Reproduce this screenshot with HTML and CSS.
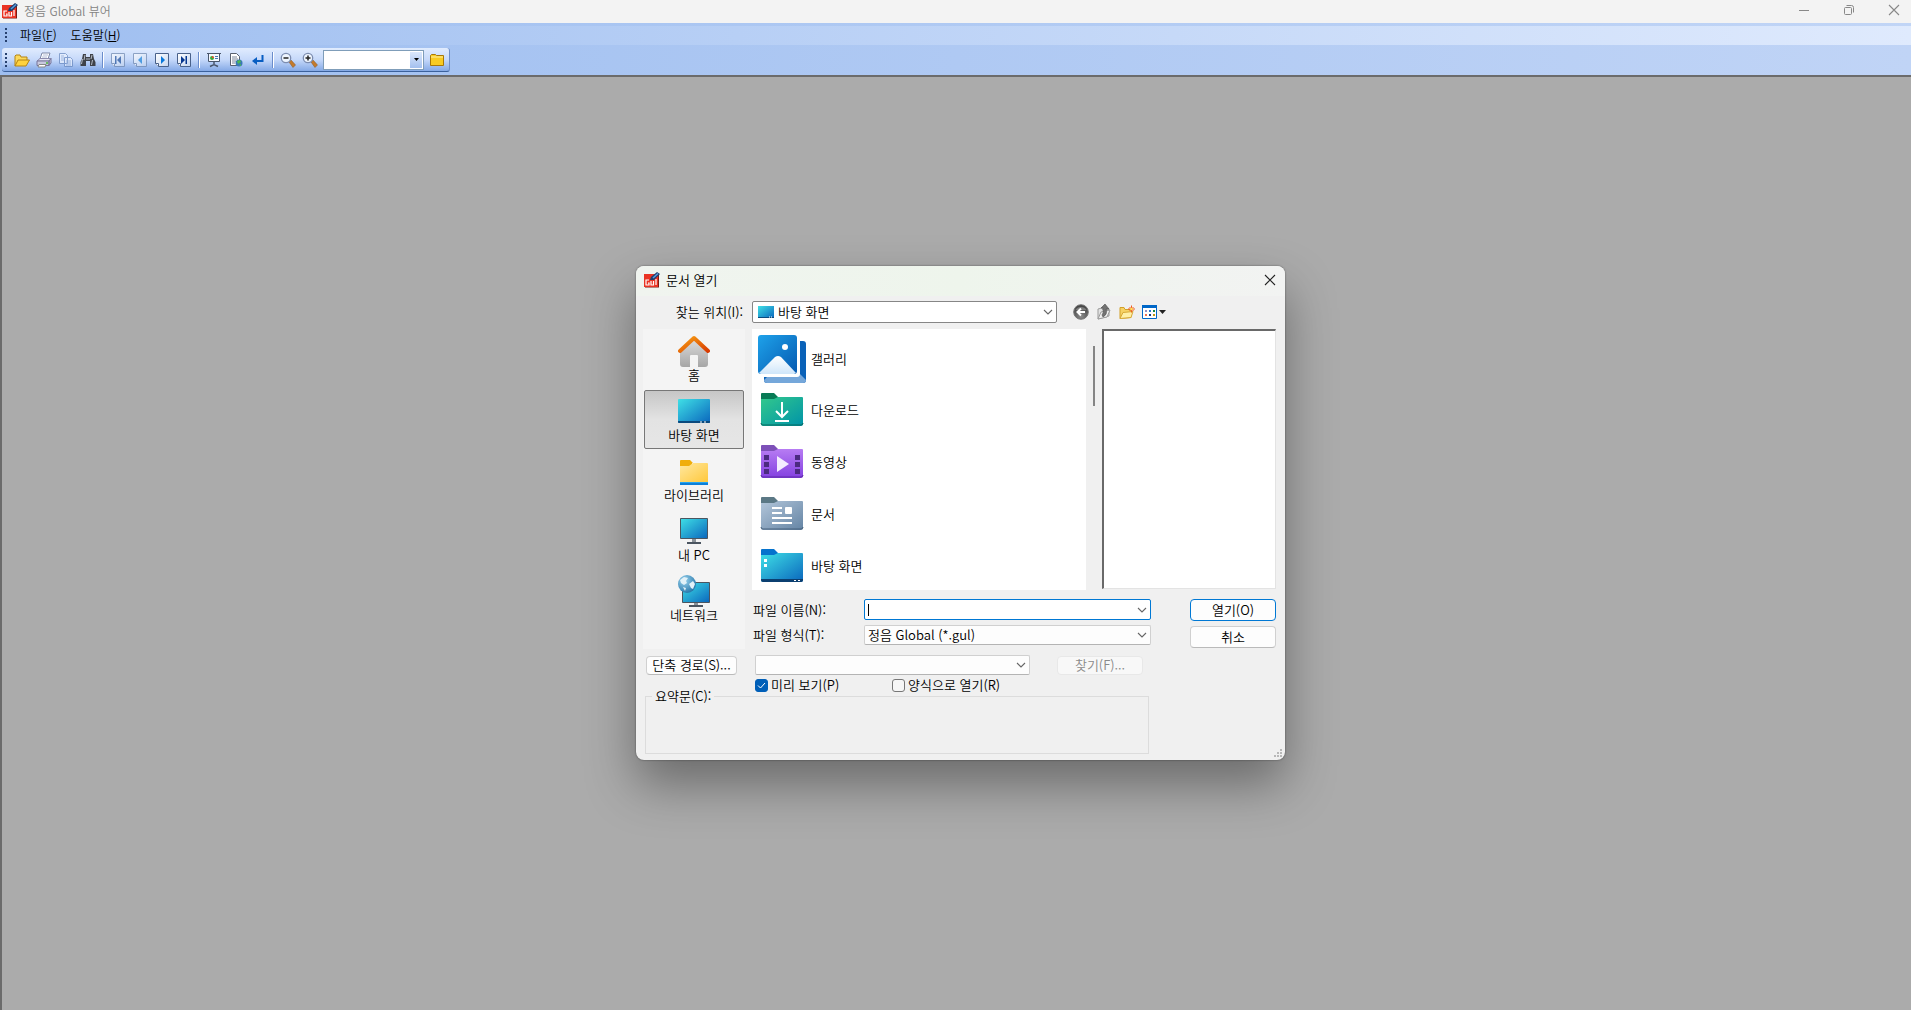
FILE: index.html
```html
<!DOCTYPE html>
<html lang="ko">
<head>
    <meta charset="UTF-8">
    <meta name="viewport" content="width=device-width, initial-scale=1.0">
    <title>정음 Global 뷰어</title>
    <link rel="stylesheet" href="styles.css">
</head>
<body>

    <!-- 공용 그라데이션과 아이콘 -->
    <svg class="defs" width="0" height="0" aria-hidden="true">
        <defs>
            <linearGradient id="g-blue" x1="0" y1="0" x2="1" y2="1"><stop offset="0" stop-color="#3fe0e6"/><stop offset="1" stop-color="#0a66bd"/></linearGradient>
            <linearGradient id="g-photo" x1="0" y1="0" x2="1" y2="1"><stop offset="0" stop-color="#1ea2ea"/><stop offset="1" stop-color="#0559b0"/></linearGradient>
            <linearGradient id="g-snow" x1="0" y1="0" x2="0" y2="1"><stop offset="0" stop-color="#fff"/><stop offset="1" stop-color="#cfe6fa"/></linearGradient>
            <linearGradient id="g-green" x1="0" y1="0" x2="1" y2="1"><stop offset="0" stop-color="#33c98c"/><stop offset="1" stop-color="#0093a8"/></linearGradient>
            <linearGradient id="g-purple" x1="0" y1="0" x2="0" y2="1"><stop offset="0" stop-color="#b77cf3"/><stop offset="1" stop-color="#8340e0"/></linearGradient>
            <linearGradient id="g-gray" x1="0" y1="0" x2="1" y2="1"><stop offset="0" stop-color="#b3c6da"/><stop offset="1" stop-color="#6484a4"/></linearGradient>
            <linearGradient id="g-yellow" x1="0" y1="0" x2="1" y2="1"><stop offset="0" stop-color="#ffe8a0"/><stop offset="1" stop-color="#ffc83c"/></linearGradient>
            <linearGradient id="g-roof" x1="0" y1="0" x2="1" y2="1"><stop offset="0" stop-color="#f7a014"/><stop offset="1" stop-color="#d83b01"/></linearGradient>
            <linearGradient id="g-wall" x1="0" y1="0" x2="0" y2="1"><stop offset="0" stop-color="#dedede"/><stop offset="1" stop-color="#a6a6a6"/></linearGradient>
            <linearGradient id="g-paper" x1="0" y1="0" x2="1" y2="1"><stop offset="0" stop-color="#fff"/><stop offset="1" stop-color="#c5d6f0"/></linearGradient>
            <radialGradient id="g-globe" cx="0.35" cy="0.3" r="0.8"><stop offset="0" stop-color="#9bd4ee"/><stop offset="1" stop-color="#1d6fa5"/></radialGradient>
            <radialGradient id="g-ball" cx="0.5" cy="0.8" r="0.8"><stop offset="0" stop-color="#8a8a8a"/><stop offset="1" stop-color="#3c3c3c"/></radialGradient>
        </defs>
        <symbol id="app-icon" viewBox="0 0 16 16">
            <path d="M1 3h14v12.500H1z" fill="#7a1a14"/>
            <path d="M0 2h14v13H0z" fill="#ea3323"/>
            <path d="M5 8H2v5h3v-2H4M7 9v4h2.500V9M12 7v6" fill="none" stroke="#fff" stroke-width="1.200"/>
            <path d="M6 8l1-3 6-5 3 2-6 6z" fill="#1c3f70"/>
            <path d="M8.500 5.500l5-4.500 1 1-5 4.500z" fill="#5b9bdc"/>
        </symbol>
        <symbol id="chevron" viewBox="0 0 10 6">
            <path d="M1 1l4 4 4-4" fill="none" stroke="#666" stroke-width="1.100"/>
        </symbol>
    </svg>

    <!-- 제목 표시줄 -->
    <header class="titlebar">
        <svg class="app-icon" aria-hidden="true"><use href="#app-icon"/></svg>
        <h1>정음 Global 뷰어</h1>
        <div class="window-buttons">
            <button type="button" aria-label="최소화"><svg width="12" height="12" viewBox="0 0 12 12"><path d="M1 6.500h10" stroke="#888"/></svg></button>
            <button type="button" aria-label="이전 크기로"><svg width="12" height="12" viewBox="0 0 12 12"><path d="M2.500 3.500h5q1 0 1 1v5q0 1-1 1h-5q-1 0-1-1v-5q0-1 1-1zM3.500 1.500h5q2 0 2 2v5" fill="none" stroke="#888"/></svg></button>
            <button type="button" aria-label="닫기"><svg width="12" height="12" viewBox="0 0 12 12"><path d="M1 1l10 10M11 1L1 11" stroke="#888" stroke-width="1.100"/></svg></button>
        </div>
    </header>

    <!-- 메뉴 -->
    <nav class="menubar">
        <span class="grip"></span>
        <button type="button">파일(<u>F</u>)</button>
        <button type="button">도움말(<u>H</u>)</button>
    </nav>

    <!-- 도구 모음 -->
    <div class="toolbar-row">
        <div class="toolbar">
            <span class="grip"></span>
            <button type="button" aria-label="열기"><svg width="16" height="16" viewBox="0 0 16 16"><path d="M1 14V4l1-1h4l1 2h6v3" fill="#fbd95c" stroke="#b58414"/><path d="M1 14l3-6h11.500l-3.500 6z" fill="#ffd23e" stroke="#b58414"/></svg></button>
            <button type="button" aria-label="인쇄"><svg width="16" height="16" viewBox="0 0 16 16"><path d="M4 7l2-6h8l-2 6z" fill="#fff" stroke="#7d87a6"/><path d="M7 3h5M6 5h5" stroke="#b4bdd6"/><path d="M1 9l3-2.500h11L13 9z" fill="#e6e6f4" stroke="#8d8cae"/><path d="M1 9h12v4.500H1zM13 9l2-2.500V11l-2 2.500z" fill="#c8c8de" stroke="#76749a"/><path d="M3 12.500h7l-1 2.500H2z" fill="#fff" stroke="#888"/><path d="M10 11h2" stroke="#46bb36" stroke-width="1.500"/></svg></button>
            <button type="button" aria-label="복사" class="dim"><svg width="16" height="16" viewBox="0 0 16 16"><path d="M1.500 1.500h6l2 2v8h-8zM6.500 5.500h6l2 2v7h-8z" fill="#e9f0fd" stroke="#6686bd"/><path d="M3 4h3M3 6h3M3 8h3M8 9h5M8 11h5M8 13h5" stroke="#8ba6d3"/></svg></button>
            <button type="button" aria-label="찾기"><svg width="16" height="16" viewBox="0 0 16 16"><path d="M3 2h3v3h4V2h3l1 5 1.500 3v4H10V9H6v5H.5v-4L2 7z" fill="#3f4248"/><path d="M2.500 7l-1 5M5 3L4 8M12 3l-1 4M12.500 8l-1 5" stroke="#b6bdc7"/><path d="M6 6h4v2H6z" fill="#777e88"/></svg></button>
            <span class="separator"></span>
            <button type="button" aria-label="첫 페이지" class="dim"><svg width="16" height="16" viewBox="0 0 16 16"><path d="M1.500 1.500h13v13h-10l-3-3z" fill="url(#g-paper)" stroke="#6f87ad"/><path d="M1.500 11.500h3v3" fill="#fff" stroke="#6f87ad"/><path d="M5 4v8h1.500V4zM11 4v8L7 8z" fill="#24539b"/></svg></button>
            <button type="button" aria-label="이전 페이지" class="dim"><svg width="16" height="16" viewBox="0 0 16 16"><path d="M1.500 1.500h13v13h-10l-3-3z" fill="url(#g-paper)" stroke="#6f87ad"/><path d="M1.500 11.500h3v3" fill="#fff" stroke="#6f87ad"/><path d="M10 4v8L6 8z" fill="#2186d8"/></svg></button>
            <button type="button" aria-label="다음 페이지"><svg width="16" height="16" viewBox="0 0 16 16"><path d="M1.500 1.500h13v13h-10l-3-3z" fill="url(#g-paper)" stroke="#49618a"/><path d="M1.500 11.500h3v3" fill="#fff" stroke="#49618a"/><path d="M7 4v8l4-4z" fill="#0878dc"/></svg></button>
            <button type="button" aria-label="마지막 페이지"><svg width="16" height="16" viewBox="0 0 16 16"><path d="M1.500 1.500h13v13h-10l-3-3z" fill="url(#g-paper)" stroke="#49618a"/><path d="M1.500 11.500h3v3" fill="#fff" stroke="#49618a"/><path d="M5 4v8l4-4zM9.500 4v8H11V4z" fill="#05368f"/></svg></button>
            <span class="separator"></span>
            <button type="button" aria-label="쪽 보기"><svg width="16" height="16" viewBox="0 0 16 16"><path d="M1 1.500h14M2.500 2v7.500h11V2" fill="#f6faff" stroke="#49566c"/><path d="M8 10v3M4 14.500l4-2 4 2" fill="none" stroke="#49566c" stroke-width="1.500"/><circle cx="6" cy="6" r="2" fill="#3ca83c"/><path d="M6 6V4a2 2 0 0 1 2 2z" fill="#e84b2c"/><path d="M9 4.500h3M9 6.500h3" stroke="#4974b5"/></svg></button>
            <button type="button" aria-label="웹 문서"><svg width="16" height="16" viewBox="0 0 16 16"><path d="M2.500 1.500h6l3 3v9h-9z" fill="#fff" stroke="#59616f"/><path d="M4 5h5M4 7h6M4 9h4M4 11h3" stroke="#7b8699"/><circle cx="11" cy="11" r="3.500" fill="#3a78b5"/><path d="M9 9l3-1 1 2-3 2zM11 13l2-1v2z" fill="#4bbb4e"/></svg></button>
            <button type="button" aria-label="줄 바꿈"><svg width="16" height="16" viewBox="0 0 16 16"><path d="M12.500 3v6H5" fill="none" stroke="#075dc2" stroke-width="2"/><path d="M2 9l5-4v8z" fill="#075dc2"/></svg></button>
            <span class="separator"></span>
            <button type="button" aria-label="축소"><svg width="16" height="16" viewBox="0 0 16 16"><path d="M9 10l2-2 4.500 5-2.500 2.500z" fill="#c57b2c" stroke="#845018" stroke-width=".5"/><circle cx="6" cy="6" r="4.700" fill="#eef5ff" stroke="#7c8db0" stroke-width="1.300"/><path d="M3.500 6h5" stroke="#222" stroke-width="1.500"/></svg></button>
            <button type="button" aria-label="확대"><svg width="16" height="16" viewBox="0 0 16 16"><path d="M9 10l2-2 4.500 5-2.500 2.500z" fill="#c57b2c" stroke="#845018" stroke-width=".5"/><circle cx="6" cy="6" r="4.700" fill="#eef5ff" stroke="#7c8db0" stroke-width="1.300"/><path d="M3.500 6h5M6 3.500v5" stroke="#222" stroke-width="1.500"/></svg></button>
            <div class="zoom-combo">
                <input type="text" aria-label="배율">
                <button type="button" aria-label="배율 목록"><svg width="5" height="3" viewBox="0 0 5 3"><path d="M0 0h5L2.500 3z"/></svg></button>
            </div>
            <button type="button" aria-label="폴더"><svg width="16" height="16" viewBox="0 0 16 16"><path d="M1.500 3.500l1-1h4l1 1h7v10h-13z" fill="#f9cb22" stroke="#a87809"/><path d="M2 5h12" stroke="#fff0a0"/></svg></button>
        </div>
    </div>

    <!-- 작업 영역 -->
    <main class="workspace"></main>

    <!-- 문서 열기 대화 상자 -->
    <form class="dialog" role="dialog" aria-labelledby="dialog-title">
        <div class="dialog-title">
            <svg class="app-icon" aria-hidden="true"><use href="#app-icon"/></svg>
            <h2 id="dialog-title">문서 열기</h2>
            <button type="button" aria-label="닫기"><svg width="12" height="12" viewBox="0 0 12 12"><path d="M1 1l10 10M11 1L1 11" stroke="#222" stroke-width="1.100"/></svg></button>
        </div>

        <div class="look-in">
            <label for="look-in">찾는 위치(I):</label>
            <div class="select strong">
                <svg class="select-icon" width="16" height="12" viewBox="0 0 16 12"><path d="M0 0h16v12H0z" fill="url(#g-blue)"/><path d="M0 11h16v1H0z" fill="#0b4a7e"/><path d="M11 11h1M13 11h1" stroke="#fff"/></svg>
                <select id="look-in"><option>바탕 화면</option></select>
                <svg class="arrow"><use href="#chevron"/></svg>
            </div>
            <div class="nav-buttons">
                <button type="button" aria-label="뒤로"><svg width="16" height="16" viewBox="0 0 16 16"><circle cx="8" cy="8" r="7.300" fill="url(#g-ball)" stroke="#777"/><path d="M2.500 6a6 5 0 0 1 11 0z" fill="#999" opacity=".6"/><path d="M12 8H5M8 4.500L4.500 8 8 11.500" fill="none" stroke="#fff" stroke-width="2"/></svg></button>
                <button type="button" aria-label="상위 폴더"><svg width="16" height="16" viewBox="0 0 16 16"><path d="M2 15V5l4-1 1 2 6-1v7z" fill="#e3e3e3" stroke="#9b9b9b"/><path d="M2 15l3-7 9-2-3 7z" fill="#f1f1f1" stroke="#9b9b9b"/><path d="M7 13q5-3 3-8H13L9 0 5 4h2q1 5-1 7z" fill="#737373" stroke="#4d4d4d" stroke-width=".6"/></svg></button>
                <button type="button" aria-label="새 폴더"><svg width="16" height="16" viewBox="0 0 16 16"><path d="M1 14.500V3.500h4l1 2h6v8z" fill="#f6d264" stroke="#d2a029"/><path d="M1 14.500l3-6 10-1-2 6z" fill="#fff0a6" stroke="#d7aa38"/><path d="M12.500 1.500v7M9 5h7M10.500 3l4 4M14.500 3l-4 4" stroke="#f05a22"/><circle cx="12.500" cy="5" r="1.300" fill="#ffe15a"/></svg></button>
                <button type="button" aria-label="보기" class="views"><svg width="24" height="16" viewBox="0 0 24 16"><path d="M.5 1.500h14v13H.5z" fill="#fff" stroke="#0067c8"/><path d="M0 1h15v3H0z" fill="#0067c8"/><path d="M3 6h2v2H3z" fill="#9b8fc0"/><path d="M7 6h2v2H7z" fill="#2878d0"/><path d="M11 6h2v2h-2z" fill="#158442"/><path d="M3 10h2v2H3z" fill="#f07452"/><path d="M7 10h2v2H7z" fill="#123a8c"/><path d="M11 10h2v2h-2z" fill="#c2950d"/><path d="M17 6h7l-3.500 4z" fill="#222"/></svg></button>
            </div>
        </div>

        <div class="browser">
            <!-- 바로 가기 위치 -->
            <nav class="places">
                <button type="button">
                    <svg width="32" height="32" viewBox="0 0 32 32"><path d="M2 15L16 3l14 12v14q0 3-3 3h-7V21q0-1-1-1h-6q-1 0-1 1v11H5q-3 0-3-3z" fill="url(#g-wall)"/><path d="M2 16L16 3l14 13" fill="none" stroke="url(#g-roof)" stroke-width="4" stroke-linecap="round" stroke-linejoin="round"/></svg>
                    <span>홈</span>
                </button>
                <button type="button" class="active">
                    <svg width="32" height="32" viewBox="0 0 32 32"><rect y="4" width="32" height="24" rx="1" fill="url(#g-blue)"/><path d="M0 26h32v1q0 1-1 1H1q-1 0-1-1z" fill="#0b4a7e"/><path d="M22 27h2M26 27h2" stroke="#fff"/></svg>
                    <span>바탕 화면</span>
                </button>
                <button type="button">
                    <svg width="32" height="32" viewBox="0 0 32 32"><path d="M2 28h28v2H2z" fill="#0d80d8"/><path d="M2 27V6q0-1 1-1h9l3 3h-1v3z" fill="#f0ae0c"/><path d="M2 11h9l4-3h14q1 0 1 1v18H2z" fill="url(#g-yellow)"/><path d="M2 27h28v1H2z" fill="#27a5ef"/></svg>
                    <span>라이브러리</span>
                </button>
                <button type="button">
                    <svg width="32" height="32" viewBox="0 0 32 32"><path d="M14 24h4v4h-4z" fill="#8b9299"/><path d="M9 27h14v2H9z" fill="#4b5560"/><path d="M2.500 3.500h27v20h-27z" fill="url(#g-blue)" stroke="#4b5560"/></svg>
                    <span>내 PC</span>
                </button>
                <button type="button">
                    <svg width="32" height="32" viewBox="0 0 32 32"><path d="M16 27h4v4h-4z" fill="#8b9299"/><path d="M11 30h14v2H11z" fill="#4b5560"/><path d="M4.500 7.500h27v20h-27z" fill="url(#g-blue)" stroke="#4b5560"/><circle cx="9" cy="9" r="9" fill="url(#g-globe)"/><path d="M2 5l4-3 4 1-2 3 1 2-3 2-3-2zM11 9l4-3 2 3-2 5-2-1zM5 12l3 1-1 3z" fill="#e1f1f8"/></svg>
                    <span>네트워크</span>
                </button>
            </nav>

            <!-- 폴더 목록 -->
            <ul class="file-list">
                <li>
                    <svg width="48" height="48" viewBox="0 0 48 48"><rect x="6" y="6" width="42" height="42" rx="3" fill="#0a62b8"/><path d="M6 45l6-6h30l6 6q0 3-3 3H9q-3 0-3-3z" fill="#75a7da"/><path d="M0 0h42v39q0 3-3 3H0z" fill="#fff"/><rect width="39" height="39" rx="3" fill="url(#g-photo)"/><path d="M1 38l16-16q3-2 6 0l15 16-2 1H3z" fill="url(#g-snow)"/><circle cx="27" cy="12" r="3" fill="#fff"/></svg>
                    <a href="#">갤러리</a>
                </li>
                <li>
                    <svg width="48" height="48" viewBox="0 0 48 48"><path d="M3 15V8q0-1 1-1h12l4 4v4z" fill="#087a55"/><path d="M3 13h13l4-2h24q1 0 1 1v26q0 2-2 2H5q-2 0-2-2z" fill="url(#g-green)"/><path d="M3 37q0 2 2 2h38q2 0 2-2" fill="none" stroke="#08685e"/><path d="M24 16v14M18 25l6 6 6-6M17 35h14" fill="none" stroke="#fff" stroke-width="2"/></svg>
                    <a href="#">다운로드</a>
                </li>
                <li>
                    <svg width="48" height="48" viewBox="0 0 48 48"><path d="M3 15V8q0-1 1-1h12l4 4v4z" fill="#7d50b8"/><path d="M3 13h13l4-2h24q1 0 1 1v26q0 2-2 2H5q-2 0-2-2z" fill="url(#g-purple)"/><path d="M3 37q0 2 2 2h38q2 0 2-2" fill="none" stroke="#5d2ba6"/><path d="M6 17h5v5H6zM6 24h5v5H6zM6 31h5v5H6zM37 17h5v5h-5zM37 24h5v5h-5zM37 31h5v5h-5z" fill="#4b2a80"/><path d="M19 18v16l12-8z" fill="#f4ecff"/></svg>
                    <a href="#">동영상</a>
                </li>
                <li>
                    <svg width="48" height="48" viewBox="0 0 48 48"><path d="M3 15V8q0-1 1-1h12l4 4v4z" fill="#5b7885"/><path d="M3 13h13l4-2h24q1 0 1 1v26q0 2-2 2H5q-2 0-2-2z" fill="url(#g-gray)"/><path d="M3 37q0 2 2 2h38q2 0 2-2" fill="none" stroke="#46617c"/><path d="M14 18h10M14 23h10M14 28h20M14 33h20" stroke="#fff" stroke-width="2"/><rect x="27" y="17" width="7" height="7" rx="1" fill="#fff"/></svg>
                    <a href="#">문서</a>
                </li>
                <li>
                    <svg width="48" height="48" viewBox="0 0 48 48"><path d="M3 15V8q0-1 1-1h12l4 4v4z" fill="#0573cd"/><path d="M3 13h13l4-2h24q1 0 1 1v26q0 2-2 2H5q-2 0-2-2z" fill="url(#g-blue)"/><path d="M3 37h42v1q0 2-2 2H5q-2 0-2-2z" fill="#0b3f70"/><path d="M6 17h3v3H6zM6 22h3v3H6zM36 38h2v1h-2zM40 38h2v1h-2z" fill="#fff"/></svg>
                    <a href="#">바탕 화면</a>
                </li>
            </ul>
            <div class="scrollbar"><span></span></div>
            <div class="preview"></div>
        </div>

        <!-- 파일 이름과 형식 -->
        <div class="file-form">
            <div class="fields">
                <label for="file-name">파일 이름(N):</label>
                <div class="select focused">
                    <span class="caret"></span>
                    <input type="text" id="file-name">
                    <button type="button" aria-label="파일 이름 목록"><svg class="arrow"><use href="#chevron"/></svg></button>
                </div>
                <label for="file-type">파일 형식(T):</label>
                <div class="select">
                    <select id="file-type"><option>정음 Global (*.gul)</option></select>
                    <svg class="arrow"><use href="#chevron"/></svg>
                </div>
            </div>
            <div class="actions">
                <button type="submit" class="btn primary">열기(O)</button>
                <button type="button" class="btn">취소</button>
            </div>
        </div>

        <div class="shortcut-row">
            <button type="button" class="btn shortcut">단축 경로(S)...</button>
            <div class="select">
                <select aria-label="단축 경로"><option></option></select>
                <svg class="arrow"><use href="#chevron"/></svg>
            </div>
            <button type="button" class="btn find" disabled>찾기(F)...</button>
        </div>

        <div class="options">
            <label><input type="checkbox" checked><svg class="tick" width="9" height="7" viewBox="0 0 9 7"><path d="M1 3.500l2.500 2.500L8 1" fill="none" stroke="#fff"/></svg>미리 보기(P)</label>
            <label><input type="checkbox">양식으로 열기(R)</label>
        </div>

        <fieldset class="summary">
            <legend>요약문(C):</legend>
        </fieldset>

        <svg class="resize" width="9" height="9" viewBox="0 0 9 9"><path d="M6 0h2v2H6zM3 3h2v2H3zM6 3h2v2H6zM0 6h2v2H0zM3 6h2v2H3zM6 6h2v2H6z" fill="#b8b8b8"/></svg>
    </form>

</body>
</html>
```
FILE: styles.css
```css
/* 기본 */
* {
    box-sizing: border-box;
}

body {
    display: flex;
    flex-direction: column;
    min-height: 100vh;
    margin: 0;
    font-family: "Noto Sans CJK KR", "Noto Sans", sans-serif;
    font-size: 13px;
    font-weight: 350;
    line-height: 16px;
    color: #000;
    background: #ababab;
}

button,
input,
select {
    margin: 0;
    padding: 0;
    border: 0;
    background: none;
    font: inherit;
    color: inherit;
    outline: none;
}

h1,
h2 {
    margin: 0;
    font-weight: inherit;
}

svg {
    flex: none;
}

.defs {
    position: absolute;
}

.app-icon {
    width: 16px;
    height: 16px;
}

/* 제목 표시줄 */
.titlebar {
    display: flex;
    align-items: center;
    height: 23px;
    padding: 0 0 1px 2px;
    background: #f3f3f3;
}

.titlebar h1 {
    flex: 1;
    margin-left: 6px;
    font-size: 12px;
    color: #848484;
}

.window-buttons {
    display: flex;
    align-self: flex-start;
}

.window-buttons button {
    display: flex;
    align-items: center;
    justify-content: center;
    width: 45px;
    height: 20px;
}

.window-buttons button:last-child {
    width: 34px;
    margin-left: 6px;
}

/* 메뉴 */
.menubar {
    display: flex;
    align-items: center;
    height: 22px;
    padding: 0 0 2px 5px;
    border-top: 3px solid transparent;
    background: linear-gradient(to right, #9ebef0, #dfeafd) padding-box, linear-gradient(to right, #9ebef0, #c1d5f6) border-box;
}

.menubar button {
    padding: 0 7px;
    font-size: 12px;
}

.menubar .grip {
    margin-right: 6px;
}

.grip {
    width: 2px;
    height: 14px;
    background: repeating-linear-gradient(to bottom, #27416f 0 2px, transparent 2px 4px);
}

/* 도구 모음 */
.toolbar-row {
    display: flex;
    height: 30px;
    padding: 3px 0 3px 2px;
    background: linear-gradient(to right, #9ebef0, #c0d4f6);
}

.toolbar {
    display: flex;
    align-items: center;
    padding: 0 1px 0 3px;
    border-bottom: 1px solid #3b619c;
    border-right: 1px solid #6f8fc8;
    border-radius: 3px;
    background: linear-gradient(to bottom, #e1ecfe, #c6d9fa 50%, #84a9e6);
}

.toolbar .grip {
    margin: 0 4px 0 0;
}

.toolbar button {
    display: flex;
    align-items: center;
    justify-content: center;
    width: 22px;
    height: 22px;
}

.toolbar .dim {
    opacity: 0.7;
}

.separator {
    width: 2px;
    height: 16px;
    margin: 0 3px;
    border-left: 1px solid #6a8ccb;
    border-right: 1px solid #fff;
}

.toolbar .zoom-combo {
    display: flex;
    width: 101px;
    height: 20px;
    margin: 0 2px;
    padding: 1px;
    border: 1px solid #7f9db9;
    background: #fff;
}

.zoom-combo input {
    flex: 1;
    min-width: 0;
}

.toolbar .zoom-combo button {
    width: 12px;
    height: 16px;
    background: linear-gradient(to bottom, #dbe8fc, #a3c0ee);
}

/* 작업 영역 */
.workspace {
    flex: 1;
    border-top: 2px solid #6b6b6b;
    border-left: 2px solid #6b6b6b;
    background: #ababab;
}

/* 문서 열기 대화 상자 */
.dialog {
    position: absolute;
    top: 266px;
    left: 636px;
    width: 649px;
    padding-bottom: 6px;
    border-radius: 8px;
    background: #f0f0f0;
    box-shadow: 0 0 2px rgba(0, 0, 0, 0.5), 0 24px 50px rgba(0, 0, 0, 0.38);
}

.dialog-title {
    display: flex;
    align-items: center;
    height: 30px;
    padding: 0 9px 2px 8px;
    border-radius: 8px 8px 0 0;
    background: linear-gradient(to right, #f0f4ef, #eef5ec 50%, #f2f3f2);
}

.dialog-title h2 {
    flex: 1;
    margin-left: 6px;
    font-size: 13px;
}

.dialog-title button {
    display: flex;
}

/* 선택 상자 */
.select {
    display: flex;
    align-items: center;
    position: relative;
    height: 20px;
    padding-left: 3px;
    border: 1px solid #d0d0d0;
    border-bottom-color: #b4b4b4;
    border-radius: 2px;
    background: #fdfdfd;
}

.select select,
.select input {
    flex: 1;
    min-width: 0;
    height: 100%;
    appearance: none;
}

.select > .arrow {
    position: absolute;
    right: 3px;
    pointer-events: none;
}

.select button {
    display: flex;
    padding-right: 3px;
}

.arrow {
    width: 10px;
    height: 6px;
}

.select.strong {
    height: 22px;
    padding-left: 5px;
    border-color: #868686;
    background: #fff;
}

.select.focused {
    height: 21px;
    border-color: #0078d4;
    background: #fff;
}

.select-icon {
    margin-right: 4px;
}

.caret {
    width: 1px;
    height: 12px;
    background: #000;
}

/* 찾는 위치 */
.look-in {
    display: flex;
    align-items: center;
    height: 33px;
    padding: 0 0 1px 7px;
}

.look-in label {
    width: 100px;
    text-align: right;
}

.look-in .select {
    width: 305px;
    margin-left: 9px;
}

.nav-buttons {
    display: flex;
    gap: 7px;
    margin-left: 16px;
}

.nav-buttons button {
    display: flex;
}

/* 탐색 영역 */
.browser {
    display: flex;
    align-items: flex-start;
    padding: 0 9px 0 7px;
}

.places {
    display: flex;
    flex-direction: column;
    gap: 1px;
    width: 102px;
    height: 320px;
    margin-bottom: -59px;
    padding: 1px;
    background: #f4f4f4;
}

.places button {
    display: flex;
    flex-direction: column;
    align-items: center;
    height: 59px;
    padding-top: 4px;
    border: 1px solid transparent;
}

.places button span {
    line-height: 16px;
}

.places .active {
    border: 1px solid #777;
    border-radius: 2px;
    background: linear-gradient(to bottom, #c6c6c6, #e3e3e3 50%, #e6e6e6);
}

.file-list {
    flex: 1;
    height: 261px;
    margin: 0 0 0 7px;
    padding: 5px 0 0 6px;
    list-style: none;
    background: #fff;
}

.file-list li {
    display: flex;
    align-items: center;
    gap: 5px;
    height: 52px;
}

.file-list li:first-child {
    height: 50px;
}

.file-list a {
    color: #000;
    text-decoration: none;
}

.scrollbar {
    width: 16px;
    padding: 17px 0 0 7px;
}

.scrollbar span {
    display: block;
    width: 2px;
    height: 60px;
    background: #858585;
}

.preview {
    width: 174px;
    height: 260px;
    border: 1px solid #e3e3e3;
    border-top: 2px solid #696969;
    border-left: 2px solid #696969;
    background: #fff;
}

/* 파일 이름과 형식 */
.file-form {
    display: flex;
    justify-content: space-between;
    padding: 9px 9px 0 117px;
}

.fields {
    display: grid;
    grid-template-columns: 111px 287px;
    row-gap: 5px;
    align-items: center;
    align-content: start;
}

.actions {
    display: flex;
    flex-direction: column;
    gap: 5px;
}

.btn {
    width: 86px;
    height: 22px;
    border: 1px solid #d0d0d0;
    border-bottom-color: #bababa;
    border-radius: 4px;
    background: #fdfdfd;
}

.btn.primary {
    border-color: #0078d4;
}

.btn:disabled {
    border-color: #e8e8e8;
    background: #f8f8f8;
    color: #8a8a8a;
}

.shortcut-row {
    display: flex;
    align-items: center;
    padding: 7px 0 0 10px;
}

.shortcut-row .select {
    width: 275px;
    margin: 0 27px 0 18px;
}

.shortcut-row .btn {
    height: 19px;
    line-height: 16px;
}

.shortcut-row .shortcut {
    width: 91px;
}

/* 옵션 */
.options {
    display: flex;
    padding: 2px 0 0 119px;
}

.options label {
    display: flex;
    align-items: center;
    position: relative;
    width: 137px;
}

.options input {
    width: 13px;
    height: 13px;
    margin-right: 3px;
    border: 1px solid #777;
    border-radius: 3px;
    background: #f6f6f6;
    appearance: none;
}

.options input:checked {
    border-color: #005fb8;
    background: #005fb8;
}

.tick {
    position: absolute;
    left: 2px;
}

/* 요약문 */
.summary {
    width: 504px;
    height: 66px;
    margin: -5px 0 0 9px;
    padding: 0;
    border: 1px solid #dcdcdc;
}

.summary legend {
    margin-left: 6px;
    padding: 0 3px;
}

.resize {
    position: absolute;
    right: 2px;
    bottom: 2px;
}
```
